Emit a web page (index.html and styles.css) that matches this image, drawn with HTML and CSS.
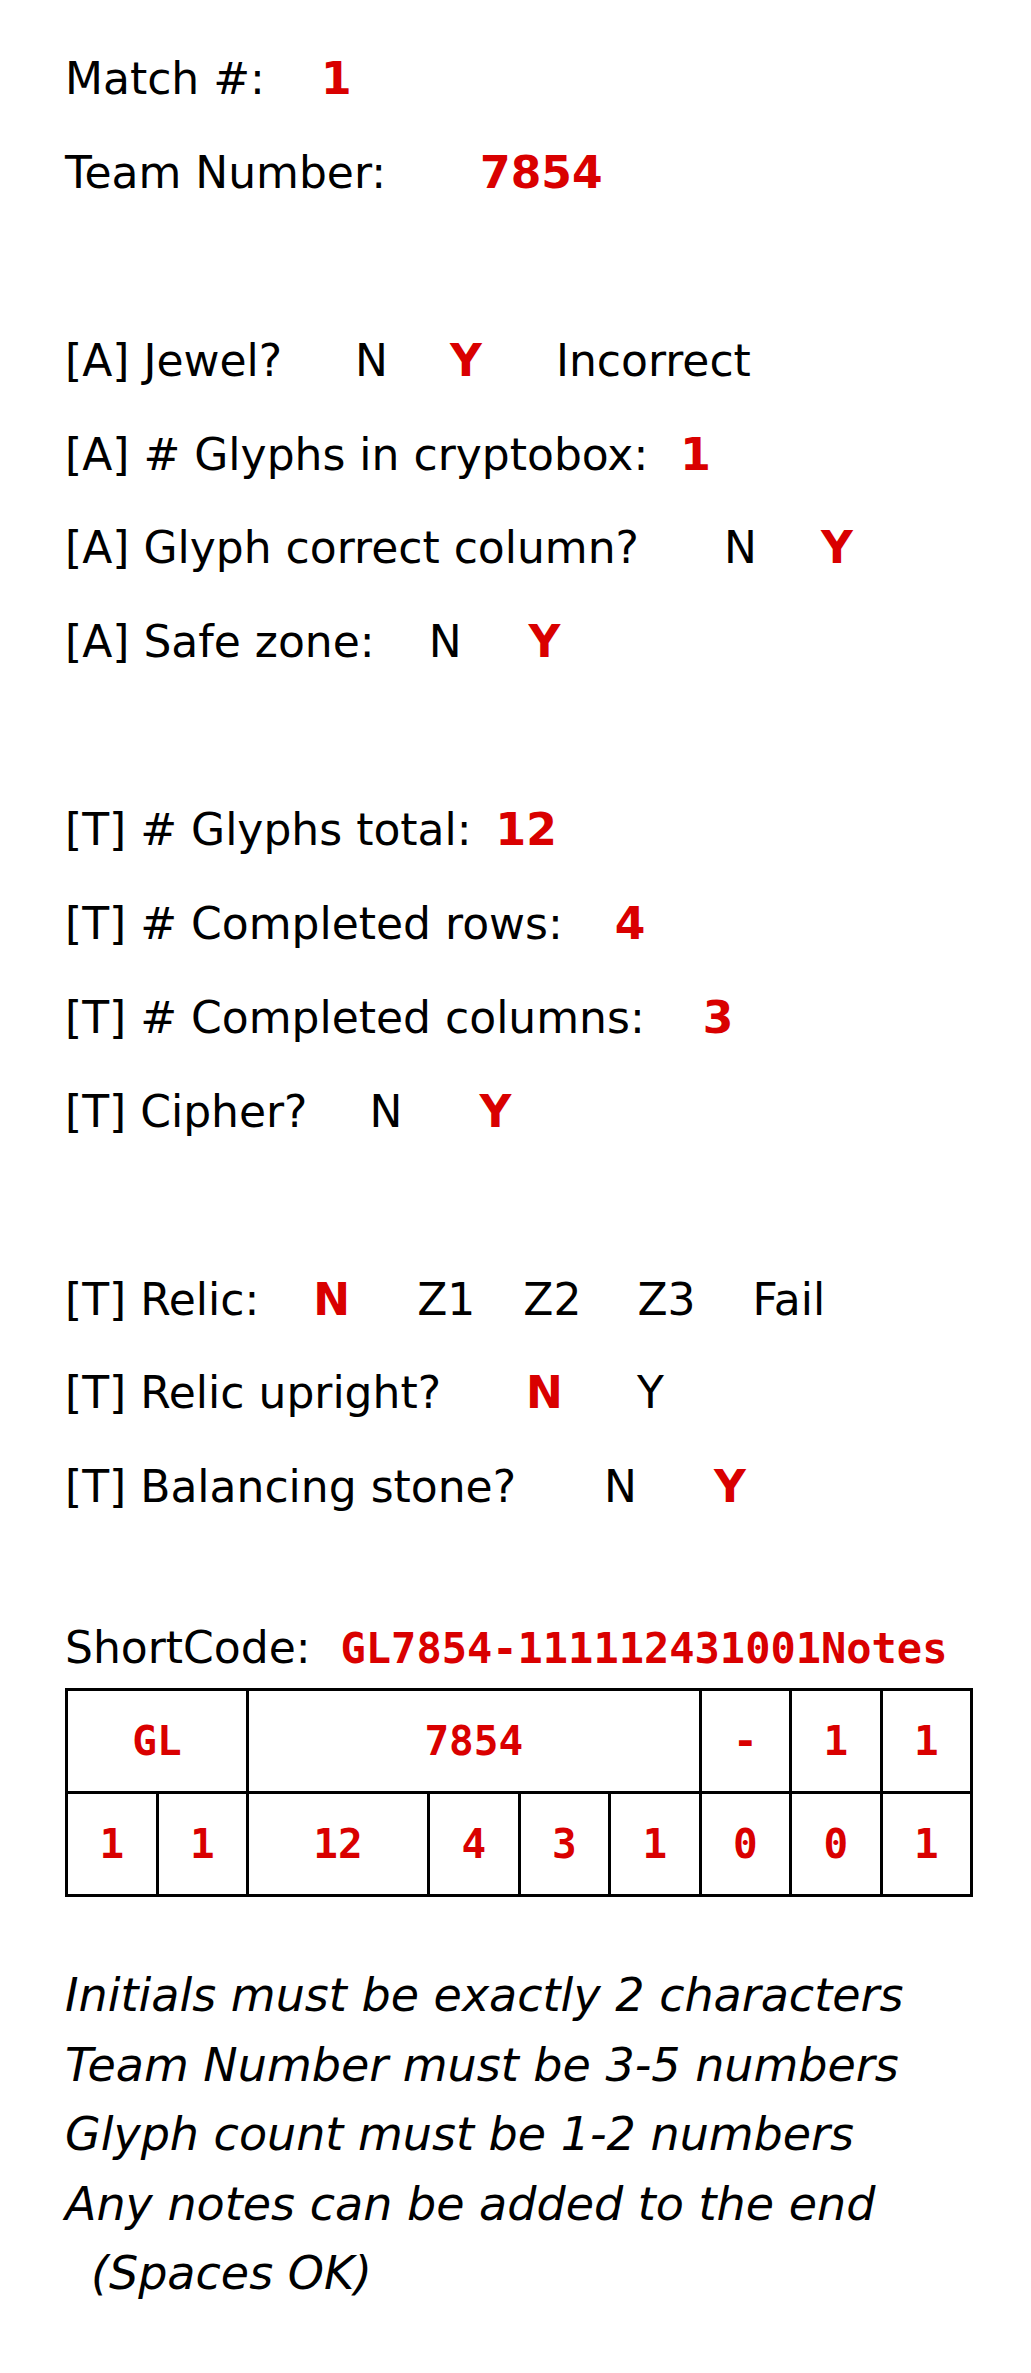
FILE: index.html
```html
<!DOCTYPE html>
<html lang="en">
<head>
<meta charset="utf-8">
<title>Scouting ShortCode</title>
<link rel="stylesheet" href="styles.css">
</head>
<body>
<main class="sheet">
  <section class="fields">
    <div class="row r-match"><span class="label">Match #:</span><span class="val">1</span></div>
    <div class="row r-team"><span class="label">Team Number:</span><span class="val">7854</span></div>
    <div class="row"></div>
    <div class="row r-jewel"><span class="label">[A] Jewel?</span><span class="opt">N</span><span class="val">Y</span><span class="opt">Incorrect</span></div>
    <div class="row r-box"><span class="label">[A] # Glyphs in cryptobox:</span><span class="val">1</span></div>
    <div class="row r-col"><span class="label">[A] Glyph correct column?</span><span class="opt">N</span><span class="val">Y</span></div>
    <div class="row r-safe"><span class="label">[A] Safe zone:</span><span class="opt">N</span><span class="val">Y</span></div>
    <div class="row"></div>
    <div class="row r-total"><span class="label">[T] # Glyphs total:</span><span class="val">12</span></div>
    <div class="row r-rows"><span class="label">[T] # Completed rows:</span><span class="val">4</span></div>
    <div class="row r-cols"><span class="label">[T] # Completed columns:</span><span class="val">3</span></div>
    <div class="row r-cipher"><span class="label">[T] Cipher?</span><span class="opt">N</span><span class="val">Y</span></div>
    <div class="row"></div>
    <div class="row r-relic"><span class="label">[T] Relic:</span><span class="val">N</span><span class="opt">Z1</span><span class="opt">Z2</span><span class="opt">Z3</span><span class="opt">Fail</span></div>
    <div class="row r-upright"><span class="label">[T] Relic upright?</span><span class="val">N</span><span class="opt">Y</span></div>
    <div class="row r-stone"><span class="label">[T] Balancing stone?</span><span class="opt">N</span><span class="val">Y</span></div>
  </section>

  <div class="shortcode"><span class="label">ShortCode:</span><span class="code">GL7854-111112431001Notes</span></div>

  <table class="code-table">
    <colgroup>
      <col><col><col><col><col><col><col><col><col><col>
    </colgroup>
    <tr>
      <td colspan="2">GL</td>
      <td colspan="5">7854</td>
      <td>-</td>
      <td>1</td>
      <td>1</td>
    </tr>
    <tr>
      <td>1</td>
      <td>1</td>
      <td colspan="2">12</td>
      <td>4</td>
      <td>3</td>
      <td>1</td>
      <td>0</td>
      <td>0</td>
      <td>1</td>
    </tr>
  </table>

  <div class="notes">
    <p>Initials must be exactly 2 characters</p>
    <p>Team Number must be 3-5 numbers</p>
    <p>Glyph count must be 1-2 numbers</p>
    <p>Any notes can be added to the end</p>
    <p class="indent">(Spaces OK)</p>
  </div>
</main>
</body>
</html>
```

FILE: styles.css
```css
html, body {
  margin: 0;
  padding: 0;
  background: #ffffff;
}

body {
  font-family: "DejaVu Sans", "Liberation Sans", sans-serif;
  color: #000000;
}

.sheet {
  padding: 32px 0 0 65px;
}

.fields {
  display: flex;
  flex-direction: column;
}

.row {
  display: flex;
  align-items: baseline;
  height: 93.9px;
  line-height: 93.9px;
  font-size: 44px;
  white-space: nowrap;
}

.label {
  font-weight: normal;
}

.opt,
.val {
  margin-left: 62px;
}

.val {
  color: #d90000;
  font-weight: bold;
}

/* per-row option spacing */
.r-match .val { margin-left: 56px; }
.r-team .val { margin-left: 94px; }
.r-jewel .opt:nth-child(2) { margin-left: 73px; }
.r-jewel .val { margin-left: 62px; }
.r-jewel .opt:nth-child(4) { margin-left: 74px; }
.r-box .val { margin-left: 32px; }
.r-col .opt { margin-left: 85px; }
.r-col .val { margin-left: 64px; }
.r-safe .opt { margin-left: 54px; }
.r-safe .val { margin-left: 67px; }
.r-total .val { margin-left: 24px; }
.r-rows .val { margin-left: 52px; }
.r-cols .val { margin-left: 58px; }
.r-cipher .opt { margin-left: 62px; }
.r-cipher .val { margin-left: 77px; }
.r-relic .val { margin-left: 54px; }
.r-relic .opt:nth-child(3) { margin-left: 67px; }
.r-relic .opt:nth-child(4) { margin-left: 48px; }
.r-relic .opt:nth-child(5) { margin-left: 56px; }
.r-relic .opt:nth-child(6) { margin-left: 57px; }
.r-upright .val { margin-left: 85px; }
.r-upright .opt { margin-left: 74px; }
.r-stone .opt { margin-left: 88px; }
.r-stone .val { margin-left: 77px; }

.shortcode {
  margin-top: 84px;
  font-size: 44px;
  line-height: 60px;
  display: flex;
  align-items: baseline;
  white-space: nowrap;
}

.code {
  margin-left: 30px;
  font-family: "DejaVu Sans Mono", "Liberation Mono", monospace;
  font-weight: bold;
  font-size: 42px;
  color: #d90000;
}

.code-table {
  margin-top: 9px;
  width: 908px;
  table-layout: fixed;
  border-collapse: collapse;
  font-family: "DejaVu Sans Mono", "Liberation Mono", monospace;
  font-weight: bold;
  font-size: 41px;
  color: #d90000;
}

.code-table col {
  width: 10%;
}

.code-table td {
  border: 3px solid #000000;
  height: 100px;
  padding: 0;
  text-align: center;
  vertical-align: middle;
}

.notes {
  margin-top: 64px;
  font-size: 46px;
  font-style: italic;
  line-height: 69.5px;
}

.notes p {
  margin: 0;
  white-space: nowrap;
}

.notes .indent {
  padding-left: 26px;
}
```
